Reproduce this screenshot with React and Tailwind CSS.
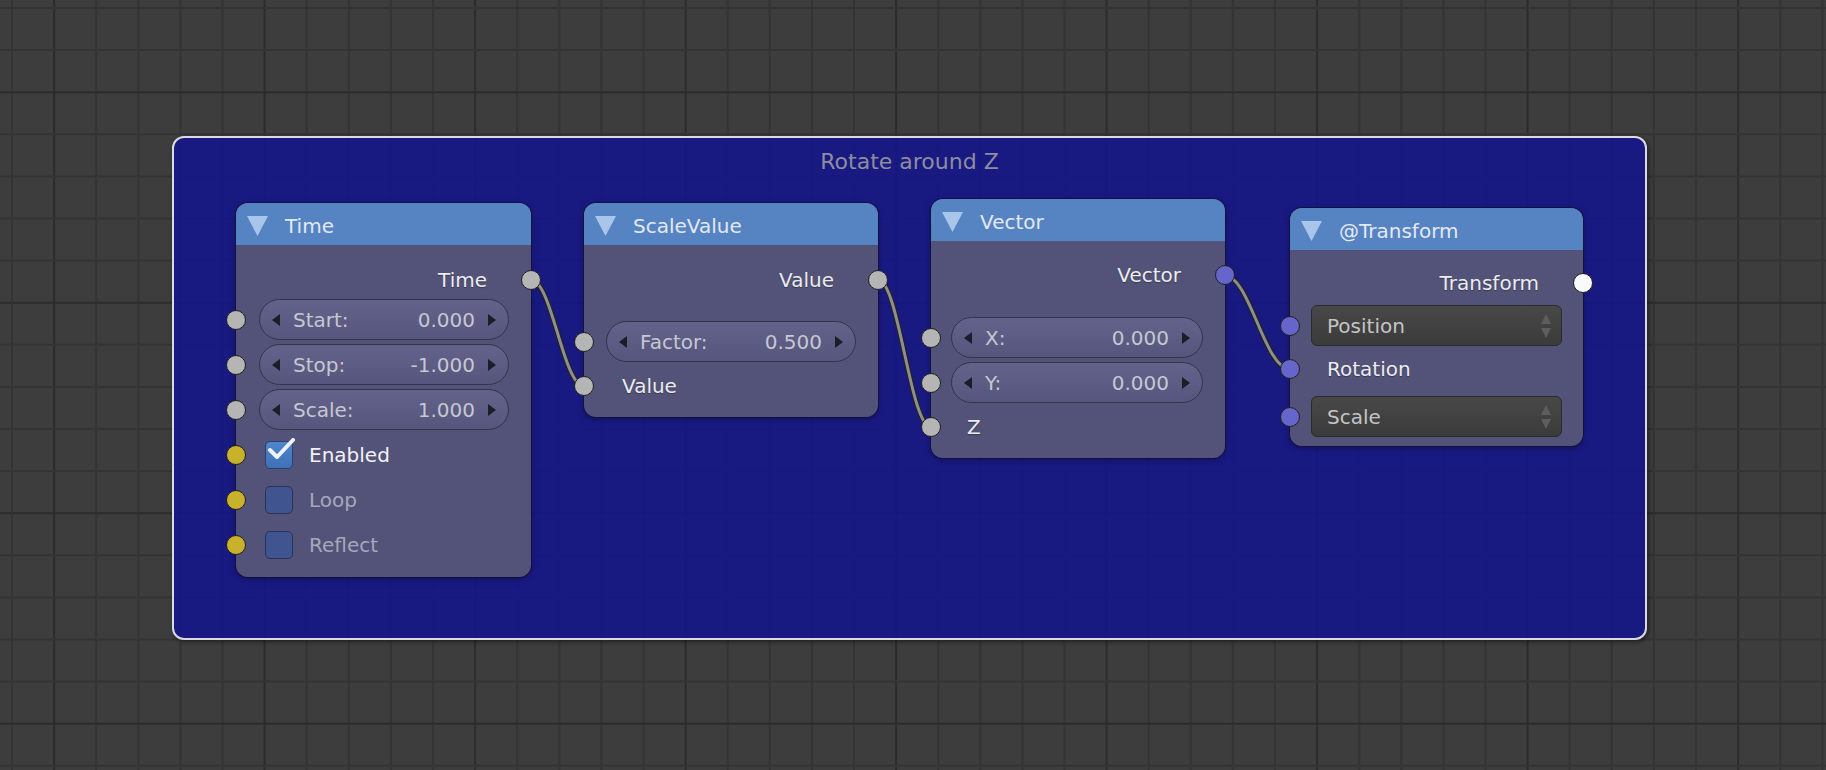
import React from 'react';

const SOCKET = {
  gray: 'bg-[#b5b5b5]',
  yellow: 'bg-[#c8b22c]',
  purple: 'bg-[#6565cc]',
  white: 'bg-[#fafafa]',
};

const Socket = ({ side = 'left', color = 'gray' }) => (
  <span
    className={`absolute top-1/2 -translate-y-1/2 w-[20px] h-[20px] rounded-full border-[1.5px] border-[#1f1f1f] z-10 ${
      side === 'left' ? 'left-[-10px]' : 'right-[-10px]'
    } ${SOCKET[color]}`}
  />
);

const Header = ({ title }) => (
  <div className="h-[42px] rounded-t-[12px] bg-[#5683c2] flex items-center pl-[11px] pt-[4px]">
    <svg width="21" height="20" viewBox="0 0 21 20">
      <polygon points="0,0 21,0 10.5,20" fill="#a9c5ea" />
    </svg>
    <span className="ml-[17px] text-[20px] text-[#e3e9f3]">{title}</span>
  </div>
);

const Output = ({ label, color = 'gray', className = '' }) => (
  <div className={`relative h-[30px] flex items-center justify-end pr-[44px] ${className}`}>
    <span className="text-[20px] text-[#ececf0] [text-shadow:0_1px_1px_rgba(0,0,0,0.35)]">{label}</span>
    <Socket side="right" color={color} />
  </div>
);

const Arrow = ({ dir }) => (
  <svg width="8" height="12" viewBox="0 0 8 12">
    {dir === 'left' ? <polygon points="8,0 8,12 0,6" fill="#1d1d27" /> : <polygon points="0,0 0,12 8,6" fill="#1d1d27" />}
  </svg>
);

const NumField = ({ label, value, inset, className = '' }) => (
  <div className={`relative h-[41px] ${className}`}>
    <Socket side="left" color="gray" />
    <div
      className={`h-full ${inset} rounded-full border border-[#33334b] bg-linear-to-b from-[#62628b] to-[#56567d] flex items-center pl-[12px] pr-[12px] text-[20px] text-[#c7c7d1]`}
    >
      <Arrow dir="left" />
      <span className="ml-[13px]">{label}</span>
      <span className="ml-auto mr-[13px]">{value}</span>
      <Arrow dir="right" />
    </div>
  </div>
);

const Check = ({ label, checked }) => (
  <div className="relative h-[45px] flex items-center pl-[29px]">
    <Socket side="left" color="yellow" />
    <div className="relative">
      <div
        className={`w-[28px] h-[28px] rounded-[5px] border ${
          checked ? 'bg-linear-to-b from-[#4f86cc] to-[#3f70b6] border-[#27406e]' : 'bg-[#405490] border-[#2b3259]'
        }`}
      />
      {checked && (
        <svg className="absolute left-[1px] top-[-3px]" width="30" height="24" viewBox="0 0 30 24">
          <polyline points="4,12 11,19 27,2" fill="none" stroke="#eef3fb" strokeWidth="4" strokeLinecap="round" strokeLinejoin="round" />
        </svg>
      )}
    </div>
    <span className={`ml-[16px] text-[20px] ${checked ? 'text-[#f2f2f4]' : 'text-[#a7a7bb]'}`}>{label}</span>
  </div>
);

const Dropdown = ({ label, className = '' }) => (
  <div className={`relative h-[41px] ${className}`}>
    <Socket side="left" color="purple" />
    <div className="mx-[21px] h-full rounded-[6px] border border-[#2b2b2b] bg-linear-to-b from-[#484848] to-[#3b3b3b] flex items-center pl-[15px] pr-[9px] text-[20px] text-[#c4c4c4]">
      <span>{label}</span>
      <svg className="ml-auto" width="12" height="26" viewBox="0 0 12 26">
        <polygon points="6,1 11,11 1,11" fill="#5d5d5d" />
        <polygon points="1,15 11,15 6,25" fill="#5d5d5d" />
      </svg>
    </div>
  </div>
);

const Label = ({ label, color = 'gray', className = '' }) => (
  <div className={`relative flex items-center ${className}`}>
    <Socket side="left" color={color} />
    <span className="text-[20px] text-[#ececf0] [text-shadow:0_1px_1px_rgba(0,0,0,0.35)]">{label}</span>
  </div>
);

const Node = ({ title, className, children }) => (
  <div
    className={`absolute flex flex-col rounded-[12px] bg-[rgba(88,88,121,0.93)] ring-1 ring-[#101030]/70 shadow-[0_2px_6px_rgba(0,0,0,0.35)] ${className}`}
  >
    <Header title={title} />
    {children}
  </div>
);

const GridLines = () => {
  const xs = Array.from({ length: 44 }, (_, k) => k);
  const ys = Array.from({ length: 19 }, (_, k) => k);
  return (
    <svg className="absolute inset-0" width="1826" height="770">
      <rect width="1826" height="770" fill="#3d3d3d" />
      {xs.map((k) => (
        <line key={`v${k}`} x1={12 + 42.1 * k} y1="0" x2={12 + 42.1 * k} y2="770" stroke={k % 5 === 1 ? '#2c2c2c' : '#343434'} strokeWidth="2" />
      ))}
      {ys.map((k) => (
        <line key={`h${k}`} x1="0" y1={8 + 42.1 * k} x2="1826" y2={8 + 42.1 * k} stroke={k % 5 === 2 ? '#2c2c2c' : '#343434'} strokeWidth="2" />
      ))}
    </svg>
  );
};

const links = [
  'M531 280 C 552 280, 563 386, 584 386',
  'M878 280 C 899 280, 910 427, 931 427',
  'M1224 275 C 1250 275, 1264 369, 1290 369',
];

export default function App() {
  return (
    <div className="relative w-[1826px] h-[770px] overflow-hidden bg-[#3d3d3d] font-['DejaVu_Sans',sans-serif]">
      <GridLines />

      {/* frame */}
      <div className="absolute left-[172px] top-[136px] w-[1475px] h-[504px] rounded-[12px] border-2 border-[#dadae4] bg-[rgba(22,22,136,0.92)] shadow-[2px_2px_4px_rgba(0,0,0,0.45)]">
        <div className="pt-[11px] text-center text-[22px] leading-[26px] text-[#8d8d9f]">Rotate around Z</div>
      </div>

      {/* links */}
      <svg className="absolute inset-0 pointer-events-none" width="1826" height="770">
        {links.map((d, i) => (
          <g key={i}>
            <path d={d} fill="none" stroke="#222222" strokeWidth="5.5" />
            <path d={d} fill="none" stroke="#8e8e8e" strokeWidth="3" />
          </g>
        ))}
      </svg>

      <Node title="Time" className="left-[236px] top-[203px] w-[295px] h-[374px]">
        <Output label="Time" className="mt-[20px]" />
        <NumField label="Start:" value="0.000" inset="ml-[23px] mr-[22px]" className="mt-[4px]" />
        <NumField label="Stop:" value="-1.000" inset="ml-[23px] mr-[22px]" className="mt-[4px]" />
        <NumField label="Scale:" value="1.000" inset="ml-[23px] mr-[22px]" className="mt-[4px]" />
        <div className="mt-[2px]">
          <Check label="Enabled" checked />
          <Check label="Loop" />
          <Check label="Reflect" />
        </div>
      </Node>

      <Node title="ScaleValue" className="left-[584px] top-[203px] w-[294px] h-[214px]">
        <Output label="Value" className="mt-[20px]" />
        <NumField label="Factor:" value="0.500" inset="mx-[22px]" className="mt-[26px]" />
        <Label label="Value" className="mt-[2px] h-[44px] pl-[38px]" />
      </Node>

      <Node title="Vector" className="left-[931px] top-[199px] w-[294px] h-[259px]">
        <Output label="Vector" color="purple" className="mt-[19px]" />
        <NumField label="X:" value="0.000" inset="ml-[20px] mr-[22px]" className="mt-[27px]" />
        <NumField label="Y:" value="0.000" inset="ml-[20px] mr-[22px]" className="mt-[4px]" />
        <Label label="Z" className="mt-[2px] h-[44px] pl-[36px]" />
      </Node>

      <Node title="@Transform" className="left-[1290px] top-[208px] w-[293px] h-[238px]">
        <Output label="Transform" color="white" className="mt-[18px]" />
        <Dropdown label="Position" className="mt-[7px]" />
        <Label label="Rotation" color="purple" className="h-[46px] pl-[37px]" />
        <Dropdown label="Scale" className="mt-[4px]" />
      </Node>
    </div>
  );
}
